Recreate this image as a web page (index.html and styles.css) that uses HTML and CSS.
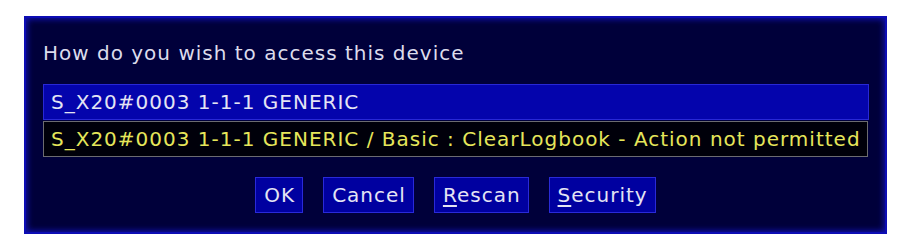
FILE: index.html
```html
<!DOCTYPE html>
<html lang="en">

<head>
	<meta charset="UTF-8" />
	<title>Access device</title>
	<link rel="stylesheet" href="styles.css">
</head>

<body>
	<div class="dialog">
		<div class="prompt">How do you wish to access this device</div>
		<ul class="access-list">
			<li class="access-item selected">S_X20#0003 1-1-1 GENERIC</li>
			<li class="access-item denied">S_X20#0003 1-1-1 GENERIC / Basic : ClearLogbook - Action not permitted</li>
		</ul>
		<div class="button-row">
			<button class="dlg-btn">OK</button>
			<button class="dlg-btn">Cancel</button>
			<button class="dlg-btn"><u>R</u>escan</button>
			<button class="dlg-btn"><u>S</u>ecurity</button>
		</div>
	</div>
</body>

</html>
```

FILE: styles.css
```css
body {
	margin: 0;
	background-color: #fff;
	font-family: "DejaVu Sans", sans-serif;
	letter-spacing: 1px;
}

.dialog {
	margin: 16px 0 0 24px;
	width: 863px;
	height: 218px;
	box-sizing: border-box;
	background-color: #00003a;
	border: 2px solid #0c0cb4;
	box-shadow: inset 0 0 6px 1px #1212b8;
	padding: 20px 17px 0 17px;
	color: #dcdcec;
}

.prompt {
	font-size: 20px;
	line-height: 30px;
	height: 30px;
}

.access-list {
	list-style: none;
	margin: 16px 0 0 0;
	padding: 0;
	width: 826px;
}

.access-item {
	font-size: 20px;
	height: 36px;
	line-height: 34px;
	box-sizing: border-box;
	padding-left: 7px;
	white-space: nowrap;
}

.access-item.selected {
	background-color: #0404ac;
	border: 1px solid #2828d6;
	color: #e4e4f4;
}

.access-item.denied {
	margin-top: 1px;
	margin-right: 1px;
	background-color: #00000a;
	border: 1px solid #6c6c70;
	color: #e6e65a;
}

.button-row {
	display: flex;
	justify-content: center;
	gap: 20px;
	margin-top: 20px;
}

.dlg-btn {
	font-family: inherit;
	font-size: 20px;
	letter-spacing: 1px;
	height: 36px;
	padding: 0 7px 0 8px;
	background-color: #0000a0;
	border: 1px solid #2a2ad8;
	color: #e4e4f4;
	cursor: pointer;
}

.dlg-btn u {
	text-underline-offset: 3px;
}
```
